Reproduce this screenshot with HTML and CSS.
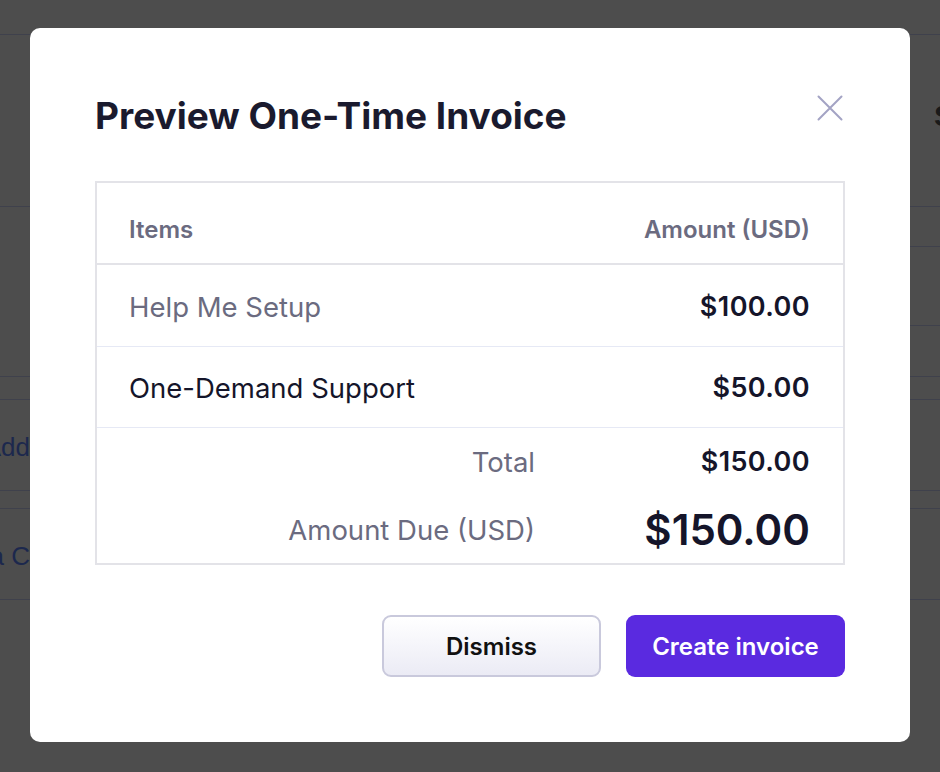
FILE: index.html
```html
<!DOCTYPE html>
<html lang="en">
    <head>
        <meta charset="utf-8" />
        <title>Preview One-Time Invoice</title>
        <link rel="stylesheet" href="styles.css">
    </head>
    <body>
        <!-- page behind the overlay -->
        <div class="page">
            <div class="page-row page-top"></div>
            <div class="page-row page-head">
                <span class="page-edge-right">S</span>
            </div>
            <div class="page-row page-tall">
                <div class="page-right-lines">
                    <div class="page-right-line l1"></div>
                    <div class="page-right-line l2"></div>
                </div>
            </div>
            <div class="page-row page-thin"></div>
            <div class="page-row page-item">
                <div class="page-edge-left"><span>Add</span></div>
            </div>
            <div class="page-row page-thin2"></div>
            <div class="page-row page-item">
                <div class="page-edge-left"><span>New Ca C</span></div>
            </div>
        </div>

        <div class="overlay">
            <div class="modal">
                <div class="modal-header">
                    <h1 class="modal-title">Preview One-Time Invoice</h1>
                    <button class="modal-close" aria-label="Close">
                        <svg width="26" height="26" viewBox="0 0 26 26">
                            <path d="M1.5 1.5 L24.5 24.5 M24.5 1.5 L1.5 24.5" stroke="#a3a3c4" stroke-width="2" fill="none" stroke-linecap="round" />
                        </svg>
                    </button>
                </div>

                <div class="invoice">
                    <div class="invoice-row invoice-head">
                        <span>Items</span>
                        <span>Amount (USD)</span>
                    </div>
                    <div class="invoice-row invoice-line">
                        <span class="muted">Help Me Setup</span>
                        <span class="amount">$100.00</span>
                    </div>
                    <div class="invoice-row invoice-line">
                        <span>One-Demand Support</span>
                        <span class="amount">$50.00</span>
                    </div>
                    <div class="invoice-totals">
                        <span class="total-label">Total</span>
                        <span class="amount">$150.00</span>
                        <span class="total-label due-label">Amount Due (USD)</span>
                        <span class="amount amount-due">$150.00</span>
                    </div>
                </div>

                <div class="modal-actions">
                    <button class="btn btn-secondary">Dismiss</button>
                    <button class="btn btn-primary">Create invoice</button>
                </div>
            </div>
        </div>
    </body>
</html>
```
FILE: styles.css
```css
html, body {
    margin: 0;
    height: 100%;
}
body {
    background: #4d4d4d;
    font-family: Inter, "Noto Sans", sans-serif;
    overflow: hidden;
}

/* background page, already dimmed */
.page {
    display: flex;
    flex-direction: column;
}
.page-row {
    border-bottom: 1px solid #3f414c;
    position: relative;
}
.page-top {
    height: 34px;
}
.page-head {
    height: 171px;
}
.page-edge-right {
    position: absolute;
    left: 934px;
    top: 64px;
    font: bold 30px "Liberation Sans", sans-serif;
    color: #1a1a1a;
}
.page-tall {
    height: 169px;
}
.page-right-lines {
    position: absolute;
    left: 910px;
    right: 0;
    top: 0;
}
.page-right-line {
    height: 1px;
    background: #3f414c;
}
.page-right-line.l1 {
    margin-top: 39px;
}
.page-right-line.l2 {
    margin-top: 78px;
}
.page-thin {
    height: 22px;
}
.page-thin2 {
    height: 17px;
}
.page-item {
    height: 91px;
    display: flex;
    align-items: center;
    padding-top: 4px;
    box-sizing: border-box;
}
.page-edge-left {
    width: 30px;
    display: flex;
    justify-content: flex-end;
    overflow: hidden;
    white-space: nowrap;
    font: 26px "Liberation Sans", sans-serif;
    color: #1c284d;
}

/* modal */
.overlay {
    position: fixed;
    inset: 0;
    display: flex;
    align-items: center;
    justify-content: center;
}
.modal {
    width: 880px;
    box-sizing: border-box;
    margin-top: -2px;
    padding: 66px 65px 65px;
    background: #ffffff;
    border-radius: 10px;
}
.modal-header {
    display: flex;
    justify-content: space-between;
    align-items: flex-start;
}
.modal-title {
    margin: 0;
    font-size: 37px;
    line-height: 44px;
    font-weight: 700;
    color: #1a1a2e;
}
.modal-close {
    margin: 1px 2px 0 0;
    padding: 0;
    border: 0;
    background: none;
    width: 26px;
    height: 26px;
    cursor: pointer;
}

.invoice {
    margin-top: 43px;
    border: 2px solid #e3e3e8;
}
.invoice-row {
    display: flex;
    justify-content: space-between;
    padding: 28px 33px 25px 32px;
    font-size: 27.5px;
    line-height: 28px;
    color: #15152a;
    border-bottom: 1px solid #e6e9f5;
}
.invoice-head {
    padding-top: 36px;
    padding-bottom: 22px;
    font-size: 24px;
    line-height: 22px;
    font-weight: 600;
    color: #6b6b80;
    border-bottom: 2px solid #e3e3e8;
}
.invoice-line + .invoice-line {
    padding-top: 27px;
}
.muted {
    color: #6b6b80;
}
.amount {
    font-size: 27px;
    font-weight: 600;
    letter-spacing: 0.4px;
    text-align: right;
    color: #15152a;
}
.invoice-totals {
    display: grid;
    grid-template-columns: 1fr 275px;
    row-gap: 30px;
    padding: 20px 33px 9px 32px;
    font-size: 27.5px;
    line-height: 28px;
    align-items: center;
}
.total-label {
    text-align: right;
    color: #6b6b80;
}
.amount-due {
    font-size: 42px;
    line-height: 48px;
    letter-spacing: 0;
}

.modal-actions {
    display: flex;
    justify-content: flex-end;
    gap: 25px;
    margin-top: 50px;
}
.btn {
    width: 219px;
    height: 62px;
    border-radius: 9px;
    font-family: Inter, "Noto Sans", sans-serif;
    font-size: 24px;
    font-weight: 600;
    cursor: pointer;
}
.btn-secondary {
    border: 2px solid #c9c9dc;
    background: linear-gradient(#ffffff, #ebebf5);
    color: #111111;
}
.btn-primary {
    border: 0;
    background: #5a2ae0;
    color: #ffffff;
}
```
